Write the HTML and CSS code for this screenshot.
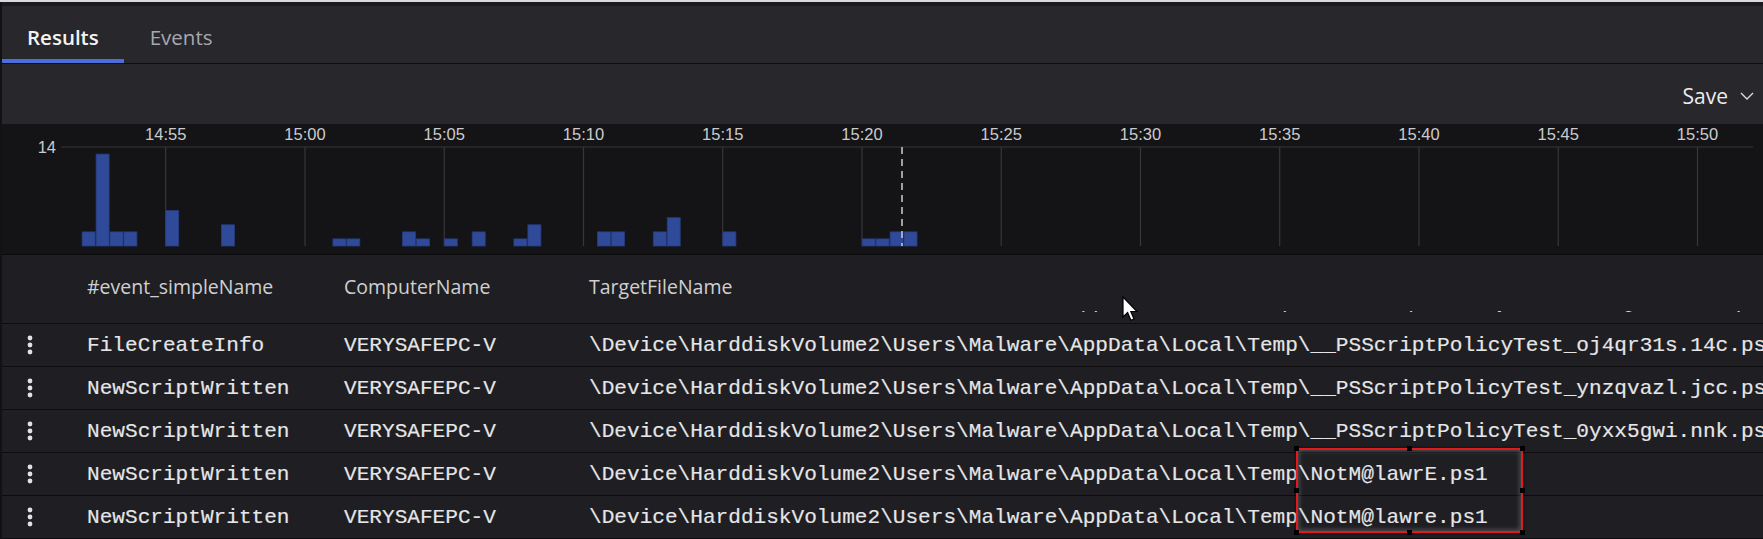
FILE: index.html
```html
<!DOCTYPE html>
<html lang="en">
<head>
<meta charset="utf-8">
<title>Results</title>
<link rel="stylesheet" href="styles.css">
</head>
<body>
<div class="app">
  <nav class="tabs">
    <div class="tab active">Results</div>
    <div class="tab">Events</div>
  </nav>

  <div class="toolbar">
    <button class="save">Save
      <svg class="chev" width="14" height="8" viewBox="0 0 14 8"><path d="M1 1l6 6 6-6"/></svg>
    </button>
  </div>

  <div class="chart">
    <svg width="1763" height="130" viewBox="0 0 1763 130">
      <g class="grid">
        <line x1="61" y1="23" x2="1753" y2="23"/>
        <line x1="165.7" y1="23" x2="165.7" y2="122"/>
        <line x1="305" y1="23" x2="305" y2="122"/>
        <line x1="444.2" y1="23" x2="444.2" y2="122"/>
        <line x1="583.5" y1="23" x2="583.5" y2="122"/>
        <line x1="722.7" y1="23" x2="722.7" y2="122"/>
        <line x1="862" y1="23" x2="862" y2="122"/>
        <line x1="1001.2" y1="23" x2="1001.2" y2="122"/>
        <line x1="1140.5" y1="23" x2="1140.5" y2="122"/>
        <line x1="1279.7" y1="23" x2="1279.7" y2="122"/>
        <line x1="1419" y1="23" x2="1419" y2="122"/>
        <line x1="1558.2" y1="23" x2="1558.2" y2="122"/>
        <line x1="1697.5" y1="23" x2="1697.5" y2="122"/>
      </g>
      <g class="labels">
        <text x="56" y="29" class="ymax">14</text>
        <text x="165.7" y="16">14:55</text>
        <text x="305" y="16">15:00</text>
        <text x="444.2" y="16">15:05</text>
        <text x="583.5" y="16">15:10</text>
        <text x="722.7" y="16">15:15</text>
        <text x="862" y="16">15:20</text>
        <text x="1001.2" y="16">15:25</text>
        <text x="1140.5" y="16">15:30</text>
        <text x="1279.7" y="16">15:35</text>
        <text x="1419" y="16">15:40</text>
        <text x="1558.2" y="16">15:45</text>
        <text x="1697.5" y="16">15:50</text>
      </g>
      <g class="bars">
        <rect x="82.1" y="107.9" width="13" height="14.1"/>
        <rect x="96.1" y="30.1" width="13" height="91.9"/>
        <rect x="110" y="107.9" width="13" height="14.1"/>
        <rect x="123.9" y="107.9" width="13" height="14.1"/>
        <rect x="165.7" y="86.6" width="13" height="35.4"/>
        <rect x="221.4" y="100.8" width="13" height="21.2"/>
        <rect x="332.9" y="114.9" width="13" height="7.1"/>
        <rect x="346.8" y="114.9" width="13" height="7.1"/>
        <rect x="402.5" y="107.9" width="13" height="14.1"/>
        <rect x="416.4" y="114.9" width="13" height="7.1"/>
        <rect x="444.3" y="114.9" width="13" height="7.1"/>
        <rect x="472.2" y="107.9" width="13" height="14.1"/>
        <rect x="513.9" y="114.9" width="13" height="7.1"/>
        <rect x="527.9" y="100.8" width="13" height="21.2"/>
        <rect x="597.5" y="107.9" width="13" height="14.1"/>
        <rect x="611.5" y="107.9" width="13" height="14.1"/>
        <rect x="653.3" y="107.9" width="13" height="14.1"/>
        <rect x="667.2" y="93.7" width="13" height="28.3"/>
        <rect x="722.9" y="107.9" width="13" height="14.1"/>
        <rect x="862.2" y="114.9" width="13" height="7.1"/>
        <rect x="876.1" y="114.9" width="13" height="7.1"/>
        <rect x="890.1" y="107.9" width="13" height="14.1"/>
        <rect x="904" y="107.9" width="13" height="14.1"/>
      </g>
      <line class="now" x1="902" y1="23" x2="902" y2="122"/>
    </svg>
  </div>

  <div class="table">
    <div class="thead cols">
      <div class="cell"></div>
      <div class="cell">#event_simpleName</div>
      <div class="cell">ComputerName</div>
      <div class="cell">TargetFileName</div>
      <div class="ghost" aria-hidden="true"><span>\Device\HarddiskVolume2\Users\Malware\AppData\Local\Temp\__PSScriptPolicyTest_vmx4gt2a.3hr.ps1</span></div>
    </div>

    <div class="trow cols">
      <div class="cell menu"><svg width="6" height="20" viewBox="0 0 6 20"><circle cx="3" cy="3" r="2.4"/><circle cx="3" cy="10" r="2.4"/><circle cx="3" cy="17" r="2.4"/></svg></div>
      <div class="cell">FileCreateInfo</div>
      <div class="cell">VERYSAFEPC-V</div>
      <div class="cell">\Device\HarddiskVolume2\Users\Malware\AppData\Local\Temp\__PSScriptPolicyTest_oj4qr31s.14c.ps1</div>
    </div>
    <div class="trow cols">
      <div class="cell menu"><svg width="6" height="20" viewBox="0 0 6 20"><circle cx="3" cy="3" r="2.4"/><circle cx="3" cy="10" r="2.4"/><circle cx="3" cy="17" r="2.4"/></svg></div>
      <div class="cell">NewScriptWritten</div>
      <div class="cell">VERYSAFEPC-V</div>
      <div class="cell">\Device\HarddiskVolume2\Users\Malware\AppData\Local\Temp\__PSScriptPolicyTest_ynzqvazl.jcc.ps1</div>
    </div>
    <div class="trow cols">
      <div class="cell menu"><svg width="6" height="20" viewBox="0 0 6 20"><circle cx="3" cy="3" r="2.4"/><circle cx="3" cy="10" r="2.4"/><circle cx="3" cy="17" r="2.4"/></svg></div>
      <div class="cell">NewScriptWritten</div>
      <div class="cell">VERYSAFEPC-V</div>
      <div class="cell">\Device\HarddiskVolume2\Users\Malware\AppData\Local\Temp\__PSScriptPolicyTest_0yxx5gwi.nnk.ps1</div>
    </div>
    <div class="trow cols">
      <div class="cell menu"><svg width="6" height="20" viewBox="0 0 6 20"><circle cx="3" cy="3" r="2.4"/><circle cx="3" cy="10" r="2.4"/><circle cx="3" cy="17" r="2.4"/></svg></div>
      <div class="cell">NewScriptWritten</div>
      <div class="cell">VERYSAFEPC-V</div>
      <div class="cell">\Device\HarddiskVolume2\Users\Malware\AppData\Local\Temp\NotM@lawrE.ps1</div>
    </div>
    <div class="trow cols">
      <div class="cell menu"><svg width="6" height="20" viewBox="0 0 6 20"><circle cx="3" cy="3" r="2.4"/><circle cx="3" cy="10" r="2.4"/><circle cx="3" cy="17" r="2.4"/></svg></div>
      <div class="cell">NewScriptWritten</div>
      <div class="cell">VERYSAFEPC-V</div>
      <div class="cell">\Device\HarddiskVolume2\Users\Malware\AppData\Local\Temp\NotM@lawre.ps1</div>
    </div>
  </div>

  <div class="annot" aria-hidden="true">
    <i class="h tl"></i><i class="h tm"></i><i class="h tr"></i>
    <i class="h ml"></i><i class="h mr"></i>
    <i class="h bl"></i><i class="h bm"></i><i class="h br"></i>
  </div>

  <svg class="cursor" width="17" height="26" viewBox="0 0 17 26" aria-hidden="true">
    <path d="M1 1V21L5.6 16.6L8.9 24.3L12 23L8.8 15.5H15Z"/>
  </svg>
</div>
</body>
</html>
```

FILE: styles.css
```css
html, body {
  margin: 0;
  padding: 0;
  overflow: hidden;
  background: #1f1f23;
}

.app {
  position: relative;
  width: 1763px;
  height: 539px;
  overflow: hidden;
  border-top: 2px solid #d9d9db;
  box-sizing: border-box;
  background: #1f1f23;
  font-family: "Open Sans", "Noto Sans", sans-serif;
}

.app::before {
  content: "";
  position: absolute;
  left: 0;
  top: 0;
  bottom: 0;
  width: 2px;
  background: #121214;
  z-index: 5;
}

/* Tabs */
.tabs {
  display: flex;
  height: 57px;
  border-top: 4px solid #1b1b1f;
  border-bottom: 1px solid #0e0e11;
  background: #27272c;
}

.tab {
  box-sizing: border-box;
  height: 57px;
  display: flex;
  align-items: center;
  padding: 8px 26px 0 26px;
  border-bottom: 4px solid transparent;
  font-size: 20.5px;
  color: #a8a8af;
}

.tab.active {
  color: #f3f3f3;
  font-weight: 600;
  border-bottom-color: #4a6fdc;
  padding-left: 27px;
  padding-right: 25px;
}

/* Toolbar */
.toolbar {
  height: 60px;
  display: flex;
  justify-content: flex-end;
  align-items: center;
  padding-right: 9px;
  background: #27272c;
}

.save {
  display: flex;
  align-items: center;
  gap: 12px;
  padding: 4px 0 0 0;
  border: 0;
  background: none;
  color: #ececec;
  font-family: "Open Sans", "Noto Sans", sans-serif;
  font-size: 21px;
}

.chev path {
  fill: none;
  stroke: #dcdcdc;
  stroke-width: 1.4;
}

/* Chart */
.chart {
  height: 130px;
  background: #141417;
  border-bottom: 1px solid #0a0a0c;
}

.chart svg {
  display: block;
}

.grid line {
  stroke: #36363b;
  stroke-width: 1.2;
}

.labels text {
  fill: #cbcbcd;
  font-family: "Liberation Sans", Arial, sans-serif;
  font-size: 16.5px;
  text-anchor: middle;
}

.labels .ymax {
  text-anchor: end;
}

.bars rect {
  fill: #2f4a98;
  stroke: #263d80;
  stroke-width: 0.8;
}

.now {
  stroke: #c4c4c4;
  stroke-width: 1.6;
  stroke-dasharray: 7 5;
}

/* Table */
.cols {
  display: grid;
  grid-template-columns: 87px 257px 245px 1fr;
}

.cell {
  white-space: nowrap;
}

.thead {
  position: relative;
  box-sizing: border-box;
  height: 69px;
  padding-top: 18px;
  border-bottom: 1px solid #0d0d10;
  font-size: 19.5px;
  line-height: 27px;
  color: #cfcfd1;
}

.ghost {
  position: absolute;
  left: 589px;
  top: 56px;
  height: 3px;
  overflow: hidden;
  font-family: "Liberation Mono", monospace;
  font-size: 21px;
  line-height: 24px;
  color: #d8d8d8;
  white-space: pre;
}

.ghost span {
  display: block;
  margin-top: -20px;
}

.trow {
  box-sizing: border-box;
  height: 43px;
  align-items: center;
  border-bottom: 1px solid #0d0d10;
  font-family: "Liberation Mono", "DejaVu Sans Mono", monospace;
  font-size: 21.1px;
  color: #e6e6e8;
  -webkit-text-stroke: 0.15px #e6e6e8;
}

.menu {
  display: flex;
  align-items: center;
  padding-left: 27px;
}

.menu svg {
  display: block;
  fill: #e2e2e2;
}

/* Screenshot annotation overlay */
.annot {
  position: absolute;
  left: 1296px;
  top: 446px;
  width: 227px;
  height: 85px;
  border: 2.5px solid #e3191b;
  box-sizing: border-box;
  box-shadow: inset 0 0 5px 1px rgba(150, 150, 150, 0.45), 0 0 3px rgba(0, 0, 0, 0.6);
}

.h {
  position: absolute;
  width: 5px;
  height: 5px;
  background: #000;
}

.tl { left: -4px; top: -4px; }
.tm { left: 109px; top: -4px; }
.tr { right: -4px; top: -4px; }
.ml { left: -4px; top: 38px; }
.mr { right: -4px; top: 38px; }
.bl { left: -4px; bottom: -4px; }
.bm { left: 109px; bottom: -4px; }
.br { right: -4px; bottom: -4px; }

.cursor {
  position: absolute;
  left: 1122px;
  top: 294px;
}

.cursor path {
  fill: #ffffff;
  stroke: #000000;
  stroke-width: 1.2;
  stroke-linejoin: miter;
}
```
